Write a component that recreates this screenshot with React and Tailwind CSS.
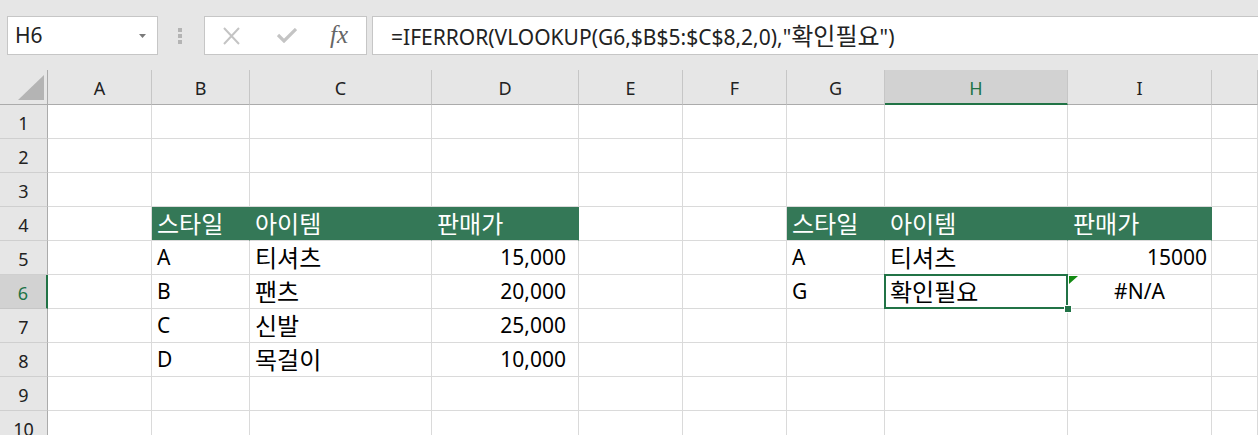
import React from "react";

const GRID =
  "grid grid-cols-[48px_104px_98px_182px_147px_104px_104px_98px_183px_144px_1fr]";
const COLS = ["A", "B", "C", "D", "E", "F", "G", "H", "I", "J"];
const FONT = "font-['Noto_Sans','Noto_Sans_CJK_KR',sans-serif]";

const isKo = (s) => /[\uAC00-\uD7A3]/.test(s);

function Txt({ t }) {
  return isKo(t) ? (
    <span className="text-[24px] leading-none">{t}</span>
  ) : (
    <span className="leading-none">{t}</span>
  );
}

const DATA = {
  4: {
    B: { t: "스타일", h: true },
    C: { t: "아이템", h: true },
    D: { t: "판매가", h: true },
    G: { t: "스타일", h: true },
    H: { t: "아이템", h: true },
    I: { t: "판매가", h: true },
  },
  5: {
    B: { t: "A" },
    C: { t: "티셔츠" },
    D: { t: "15,000", a: "acc" },
    G: { t: "A" },
    H: { t: "티셔츠" },
    I: { t: "15000", a: "num" },
  },
  6: {
    B: { t: "B" },
    C: { t: "팬츠" },
    D: { t: "20,000", a: "acc" },
    G: { t: "G" },
    H: { t: "확인필요", sel: true },
    I: { t: "#N/A", a: "center", err: true },
  },
  7: {
    B: { t: "C" },
    C: { t: "신발" },
    D: { t: "25,000", a: "acc" },
  },
  8: {
    B: { t: "D" },
    C: { t: "목걸이" },
    D: { t: "10,000", a: "acc" },
  },
};

function Cell({ c }) {
  if (!c) {
    return <div className="h-[34px] border-r border-b border-[#dadada]" />;
  }
  if (c.h) {
    return (
      <div className="h-[34px] border-r border-r-[#347857] border-b border-b-[#dadada] bg-[#347857] text-white flex items-center pl-[5px] text-[21px] leading-none whitespace-nowrap">
        <Txt t={c.t} />
      </div>
    );
  }
  let align = "justify-start pl-[5px]";
  if (c.a === "acc") align = "justify-end pr-[12px]";
  if (c.a === "num") align = "justify-end pr-[4px]";
  if (c.a === "center") align = "justify-center";
  return (
    <div
      className={
        "relative h-[34px] border-r border-b border-[#dadada] flex items-center text-[21px] leading-none text-black whitespace-nowrap " +
        align
      }
    >
      <Txt t={c.t} />
      {c.err && (
        <svg
          className="absolute left-[1px] top-[1px] z-0"
          width="9"
          height="8"
          viewBox="0 0 9 8"
        >
          <polygon points="0,0 9,0 0,8" fill="#138a13" />
        </svg>
      )}
      {c.sel && (
        <>
          <div className="absolute -left-px -top-px -right-px -bottom-px border-2 border-[#217346] z-10 pointer-events-none" />
          <div className="absolute -right-[5px] -bottom-[5px] w-[8px] h-[8px] bg-[#217346] border border-white z-20" />
        </>
      )}
    </div>
  );
}

export default function App() {
  const rows = [1, 2, 3, 4, 5, 6, 7, 8, 9, 10];
  return (
    <div
      className={
        "w-[1258px] h-[435px] overflow-hidden bg-white text-black " + FONT
      }
    >
      {/* Formula bar */}
      <div className="h-[70px] bg-[#e6e6e6] flex items-start pt-[16px]">
        <div className="ml-[7px] w-[151px] h-[39px] bg-white border border-[#c6c6c6] flex items-center justify-between pl-[7px] pr-[11px] shrink-0">
          <span className="text-[21px] leading-none text-[#222]">H6</span>
          <svg width="7" height="4" viewBox="0 0 7 4">
            <polygon points="0,0 7,0 3.5,4" fill="#7a7a7a" />
          </svg>
        </div>
        <div className="ml-[20px] h-[39px] flex flex-col justify-center gap-[2px] shrink-0">
          <div className="w-[4px] h-[4px] bg-[#b4b4b4]" />
          <div className="w-[4px] h-[4px] bg-[#b4b4b4]" />
          <div className="w-[4px] h-[4px] bg-[#b4b4b4]" />
        </div>
        <div className="ml-[22px] w-[163px] h-[39px] bg-white border border-[#c6c6c6] flex items-center pl-[17px] shrink-0">
          <svg width="19" height="18" viewBox="0 0 19 18">
            <path
              d="M2 1 L17 17 M17 1 L2 17"
              stroke="#c4c4c4"
              strokeWidth="2"
              fill="none"
            />
          </svg>
          <svg className="ml-[36px]" width="20" height="15" viewBox="0 0 20 15">
            <path
              d="M1 7 L7 13 L19 1"
              stroke="#c4c4c4"
              strokeWidth="3.2"
              fill="none"
            />
          </svg>
          <span className="ml-[33px] font-['Liberation_Serif',serif] italic text-[25px] leading-none text-[#666] -mt-[2px]">
            fx
          </span>
        </div>
        <div className="ml-[5px] flex-1 h-[39px] bg-white border border-r-0 border-[#c6c6c6] flex items-center pl-[18px] text-[21px] leading-none text-[#222] whitespace-nowrap">
          <span>
            =IFERROR(VLOOKUP(G6,$B$5:$C$8,2,0),"
            <span className="text-[24px]">확인필요</span>")
          </span>
        </div>
      </div>

      {/* Column headers */}
      <div className={GRID}>
        <div className="h-[35px] bg-[#e6e6e6] border-r border-b border-[#ababab] relative">
          <svg
            className="absolute left-0 top-0"
            width="48"
            height="35"
            viewBox="0 0 48 35"
          >
            <polygon points="44,5 44,30 18,30" fill="#b4b4b4" />
          </svg>
        </div>
        {COLS.map((k) =>
          k === "H" ? (
            <div
              key={k}
              className="h-[35px] bg-[#d2d2d2] border-r border-r-[#c6c6c6] border-b-2 border-b-[#217346] flex items-center justify-center text-[18px] leading-none text-[#217346] pt-[2px]"
            >
              {k}
            </div>
          ) : (
            <div
              key={k}
              className="h-[35px] bg-[#e6e6e6] border-r border-r-[#c6c6c6] border-b border-b-[#ababab] flex items-center justify-center text-[18px] leading-none text-[#222] pt-[2px]"
            >
              {k === "J" ? "" : k}
            </div>
          )
        )}

        {rows.map((r) => (
          <React.Fragment key={r}>
            {r === 6 ? (
              <div className="h-[34px] bg-[#d2d2d2] border-r-2 border-r-[#217346] border-b border-b-[#c6c6c6] flex items-center justify-center text-[18px] leading-none text-[#217346] pt-[3px]">
                {r}
              </div>
            ) : (
              <div className="h-[34px] bg-[#e6e6e6] border-r border-r-[#ababab] border-b border-b-[#cfcfcf] flex items-center justify-center text-[18px] leading-none text-[#222] pt-[3px]">
                {r}
              </div>
            )}
            {COLS.map((k) => (
              <Cell key={k} c={DATA[r] && DATA[r][k]} />
            ))}
          </React.Fragment>
        ))}
      </div>
    </div>
  );
}
